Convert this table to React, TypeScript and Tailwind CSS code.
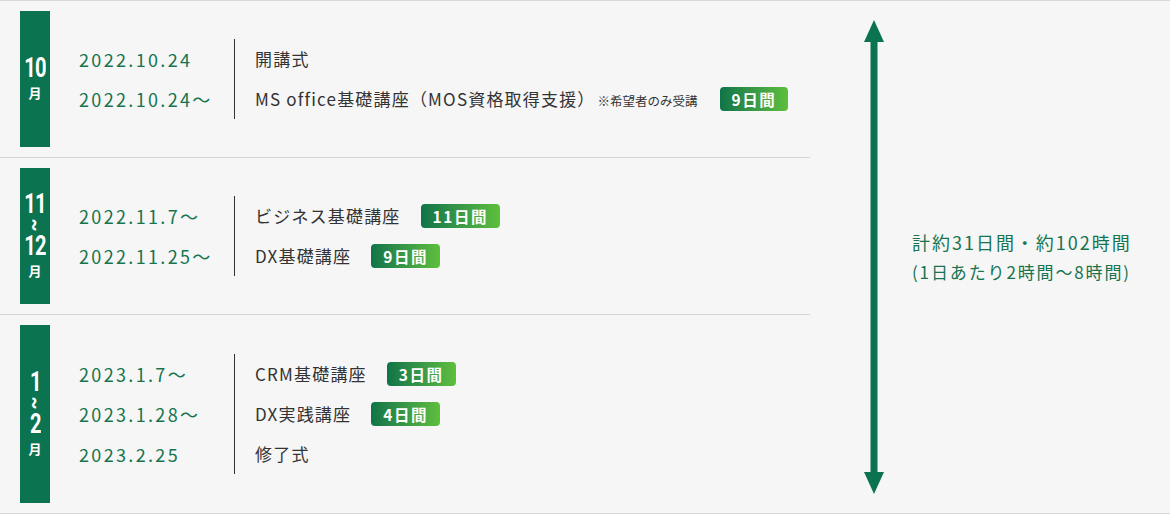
import React from 'react';

type Item = { date: string; course: string; note?: string; days?: string };

const blocks: { month: React.ReactNode; bar: string; items: Item[] }[] = [
  {
    month: <Num>10</Num>,
    bar: 'h-[136px]',
    items: [
      { date: '2022.10.24', course: '開講式' },
      { date: '2022.10.24〜', course: 'MS office基礎講座（MOS資格取得支援）', note: '※希望者のみ受講', days: '9日間' },
    ],
  },
  {
    month: (
      <>
        <Num>11</Num>
        <Tilde />
        <Num>12</Num>
      </>
    ),
    bar: 'h-[136px]',
    items: [
      { date: '2022.11.7〜', course: 'ビジネス基礎講座', days: '11日間' },
      { date: '2022.11.25〜', course: 'DX基礎講座', days: '9日間' },
    ],
  },
  {
    month: (
      <>
        <Num>1</Num>
        <Tilde />
        <Num>2</Num>
      </>
    ),
    bar: 'h-[178px]',
    items: [
      { date: '2023.1.7〜', course: 'CRM基礎講座', days: '3日間' },
      { date: '2023.1.28〜', course: 'DX実践講座', days: '4日間' },
      { date: '2023.2.25', course: '修了式' },
    ],
  },
];

export default function App() {
  return (
    <div
      className="w-[1170px] h-[514px] bg-[#f6f6f6] border-t border-b border-[#d8d8d8] flex"
      style={{ fontFamily: '"Noto Sans CJK JP", "Noto Sans", sans-serif' }}
    >
      {/* Schedule */}
      <div className="w-[810px] flex flex-col">
        {blocks.map((b, i) => (
          <div
            key={i}
            className={`flex items-center px-[20px] py-[10px] ${i < blocks.length - 1 ? 'border-b border-[#d6d6d6]' : ''}`}
          >
            <div className={`w-[30px] ${b.bar} bg-[#0c7350] flex flex-col items-center justify-center text-white`}>
              {b.month}
              <span className="text-[13px] font-bold leading-[20px] mt-[2px]">月</span>
            </div>
            <div className="ml-[29px] w-[155px] flex flex-col">
              {b.items.map((it) => (
                <div key={it.date} className="h-[40px] leading-[40px] text-[18px] tracking-[0.13em] text-[#17744f]">
                  {it.date}
                </div>
              ))}
            </div>
            <div className="border-l border-[#333] pl-[20px] flex flex-col">
              {b.items.map((it) => (
                <div key={it.course} className="h-[40px] flex items-center text-[17px] tracking-[0.07em] text-[#333]">
                  <span>{it.course}</span>
                  {it.note && <span className="text-[12.5px] tracking-normal ml-[2px] mt-[4px]">{it.note}</span>}
                  {it.days && <Badge className={it.note ? 'ml-[22px]' : 'ml-[20px]'}>{it.days}</Badge>}
                </div>
              ))}
            </div>
          </div>
        ))}
      </div>

      {/* Total */}
      <div className="flex items-center">
        <svg className="ml-[54px]" width="20" height="474" viewBox="0 0 20 474">
          <polygon points="10,0 20,22 0,22" fill="#0c7350" />
          <rect x="6.5" y="20" width="7" height="434" fill="#0c7350" />
          <polygon points="10,474 20,452 0,452" fill="#0c7350" />
        </svg>
        <div className="ml-[28px] text-[#17744f]">
          <p className="text-[18px] tracking-[0.11em] leading-[30px]">計約31日間・約102時間</p>
          <p className="text-[17px] tracking-[0.11em] leading-[30px]">(1日あたり2時間〜8時間)</p>
        </div>
      </div>
    </div>
  );
}

function Num({ children }: { children: React.ReactNode }) {
  return (
    <span className="inline-block scale-x-[0.72] text-[28px] font-bold leading-[26px] tracking-[-0.04em]" style={{ fontFamily: 'Roboto, sans-serif' }}>
      {children}
    </span>
  );
}

function Tilde() {
  return (
    <span className="inline-block rotate-90 text-[20px] font-bold leading-[12px] my-[2px]" style={{ fontFamily: 'Roboto, sans-serif' }}>
      ~
    </span>
  );
}

function Badge({ children, className }: { children: React.ReactNode; className: string }) {
  return (
    <span className={`${className} h-[24px] px-[12px] rounded-[4px] bg-gradient-to-r from-[#0e7447] to-[#5dbf3c] text-white text-[15.5px] font-bold tracking-[0.1em] leading-[24px]`}>
      {children}
    </span>
  );
}
